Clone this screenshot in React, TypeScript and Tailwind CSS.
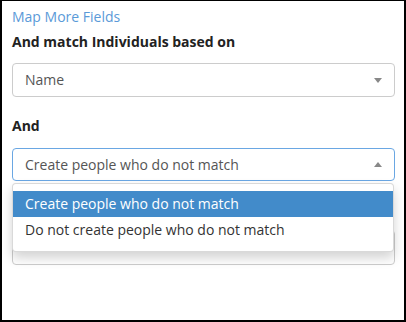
import { useState } from 'react';

const options = ['Create people who do not match', 'Do not create people who do not match'];

function Caret({ up }: { up?: boolean }) {
  return (
    <svg width="8" height="5" viewBox="0 0 8 5" className="shrink-0">
      <path d={up ? 'M0 5 L4 0 L8 5 Z' : 'M0 0 L8 0 L4 5 Z'} fill="#888" />
    </svg>
  );
}

export default function App() {
  const [matchOn] = useState('Name');
  const [selected] = useState(0);

  return (
    <div className="w-[406px] h-[322px] overflow-hidden bg-white border-l-2 border-t border-r-2 border-b-2 border-black font-['Open_Sans',sans-serif] text-[14px] leading-5 text-[#333]">
      <div className="pl-[10px] pr-[9px]">
        <a className="block mt-[6px] text-[#5a9ad8]">Map More Fields</a>
        <div className="mt-[5px] font-bold text-[#222]">And match Individuals based on</div>

        {/* Match field */}
        <div className="mt-[11px] h-[34px] flex items-center justify-between rounded-[4px] border border-[#ccc] pl-3 pr-3">
          <span className="text-[#555]">{matchOn}</span>
          <Caret />
        </div>

        <div className="mt-[19px] font-bold text-[#222]">And</div>

        {/* Create option select, open */}
        <div className="relative mt-3">
          <div className="h-[33px] flex items-center justify-between rounded-[4px] border border-[#6aa7e3] pl-3 pr-3">
            <span className="text-[#555]">{options[selected]}</span>
            <Caret up />
          </div>

          {/* Field underneath the open list */}
          <div className="mt-[49px] h-[35px] rounded-[4px] border border-[#ccc]" />

          <div className="absolute left-0 right-px top-[35px] z-10 bg-white rounded-[4px] border border-[rgba(0,0,0,0.15)] pt-[7px] pb-[8px] shadow-[0_6px_12px_rgba(0,0,0,0.175)]">
            {options.map((opt, i) => (
              <div
                key={opt}
                className={
                  i === selected
                    ? 'h-[26px] flex items-center pl-3 bg-[#428bca] text-white'
                    : 'h-[26px] flex items-center pl-3 text-[#333]'
                }
              >
                {opt}
              </div>
            ))}
          </div>
        </div>
      </div>
    </div>
  );
}
